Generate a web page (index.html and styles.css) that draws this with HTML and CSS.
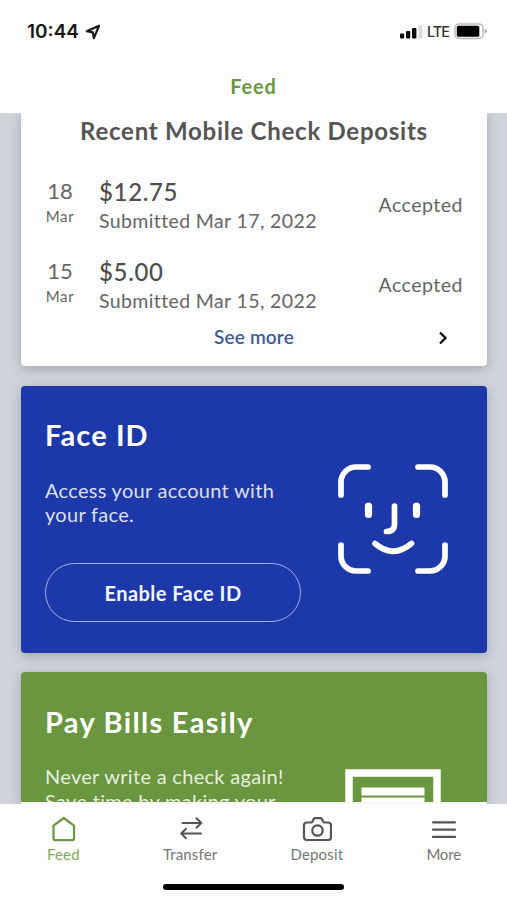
FILE: index.html
```
<!DOCTYPE html>
<html lang="en">
<head>
<meta charset="utf-8">
<title>Feed</title>
<link rel="stylesheet" href="styles.css">
</head>
<body>
<div class="phone">
  <header class="header">
    <div class="status">
      <div class="status-left">
        <span class="time">10:44</span>
        <svg class="location" width="16" height="16" viewBox="0 0 16 16"><path d="M14 1.800 1.800 7.200l6 1.100 1.100 5.900z" fill="none" stroke="#161616" stroke-width="2.200" stroke-linejoin="round"/></svg>
      </div>
      <div class="status-right">
        <svg width="23" height="15" viewBox="0 0 23 15"><g fill="#0a0a0a"><rect x="0" y="9.500" width="4.200" height="5" rx="1.200"/><rect x="6" y="7" width="4.200" height="7.500" rx="1.200"/><rect x="12" y="4" width="4.400" height="10.500" rx="1.200"/></g><rect x="18.500" y="1" width="4" height="13.500" rx="1" fill="#dcdcdc"/></svg>
        <span class="lte">LTE</span>
        <svg class="battery" width="33" height="17" viewBox="0 0 33 17"><rect x="1" y="1" width="28" height="14.500" rx="4" fill="#fff" stroke="#bcbcbc" stroke-width="1.500"/><rect x="2.800" y="2.800" width="22.500" height="11" rx="1.500" fill="#000"/><path d="M30.700 5.800q2 .7 2 2.500t-2 2.500z" fill="#a8a8a8"/></svg>
      </div>
    </div>
    <h1 class="page-title">Feed</h1>
  </header>

  <main class="feed">
    <section class="card deposits">
      <h2 class="deposits-title">Recent Mobile Check Deposits</h2>
      <div class="deposit">
        <div class="date"><span class="day">18</span><span class="month">Mar</span></div>
        <div class="detail"><span class="amount">$12.75</span><span class="submitted">Submitted Mar 17, 2022</span></div>
        <span class="state">Accepted</span>
      </div>
      <div class="deposit">
        <div class="date"><span class="day">15</span><span class="month">Mar</span></div>
        <div class="detail"><span class="amount">$5.00</span><span class="submitted">Submitted Mar 15, 2022</span></div>
        <span class="state">Accepted</span>
      </div>
      <div class="more-row">
        <a class="see-more">See more</a>
        <svg class="chevron" width="10" height="14" viewBox="0 0 10 14"><path d="M2 1.500 7.500 7 2 12.500" fill="none" stroke="#111" stroke-width="2.300"/></svg>
      </div>
    </section>

    <section class="card promo face">
      <div class="promo-text">
        <h2 class="promo-title face-title">Face ID</h2>
        <p class="promo-copy">Access your account with<br>your face.</p>
        <button class="enable">Enable Face ID</button>
      </div>
      <svg class="face-icon" width="110" height="110" viewBox="0 0 110 110" fill="none" stroke="#fff" stroke-width="6" stroke-linecap="round"><path d="M3 31V18A15 15 0 0 1 18 3H30M80 3H92A15 15 0 0 1 107 18V31M107 81V92A15 15 0 0 1 92 107H80M30 107H18A15 15 0 0 1 3 92V81" stroke-width="5.700"/><path d="M56.500 42V60Q56.500 67.500 48.500 67.500M37 79.500Q55 95 73.500 79.500" stroke-width="5.700"/><path d="M30.500 42v8.500M78.500 42v8.500" stroke-width="7.200"/></svg>
    </section>

    <section class="card promo bills">
      <div class="promo-text">
        <h2 class="promo-title bills-title">Pay Bills Easily</h2>
        <p class="promo-copy">Never write a check again!<br>Save time by making your</p>
      </div>
      <svg class="bill-icon" width="96" height="96" viewBox="0 0 96 96"><path d="M4 96V4H92V96" fill="none" stroke="#fff" stroke-width="7.500"/><path d="M16.500 18.500h63v8h-63zM16.500 28.500h63v50h-63z" fill="#fff"/></svg>
    </section>
    <div class="feed-edge"></div>
  </main>

  <nav class="tabs">
    <a class="tab active">
      <svg width="30" height="28" viewBox="0 0 30 28" fill="none" stroke="#6a973f" stroke-width="2.200" stroke-linejoin="round"><path d="M5.500 9.700 15.800 2l10.200 7.700v12.500a2 2 0 0 1-2 2H7.500a2 2 0 0 1-2-2z"/></svg>
      <span>Feed</span>
    </a>
    <a class="tab">
      <svg width="30" height="28" viewBox="0 0 30 28" fill="none" stroke="#555" stroke-width="2" stroke-linecap="round" stroke-linejoin="round"><path d="M7.500 7h18.500M21.500 2.300l4.800 4.700-4.800 4.700M26 17.500H7M11 12.800 6.200 17.500l4.800 4.700"/></svg>
      <span>Transfer</span>
    </a>
    <a class="tab">
      <svg width="30" height="28" viewBox="0 0 30 28" fill="none" stroke="#555" stroke-width="2.200" stroke-linejoin="round"><path d="M4.500 6.500h4.500q1 0 1.500-1l1.200-2.400q.5-.9 1.500-.9h5.200q1 0 1.500.9l1.200 2.400q.5 1 1.500 1H26a3 3 0 0 1 3 3V21a3 3 0 0 1-3 3h-21a3 3 0 0 1-3-3V9.500A3 3 0 0 1 4.500 6.500z"/><circle cx="15.500" cy="14.500" r="5.200"/></svg>
      <span>Deposit</span>
    </a>
    <a class="tab">
      <svg width="30" height="28" viewBox="0 0 30 28" fill="none" stroke="#555" stroke-width="2.300" stroke-linecap="round"><path d="M4 6.300h22M4 13.600h22M4 20.900h22"/></svg>
      <span class="more-label">More</span>
    </a>
  </nav>
  <div class="home-bar"></div>
</div>
</body>
</html>
```
FILE: styles.css
```
* { box-sizing: border-box; }
body { margin: 0; font-family: Lato, "Open Sans", sans-serif; color: #666; background: #fdfdfd; }
h1, h2, p { margin: 0; }

.phone { display: flex; flex-direction: column; width: 507px; height: 900px; overflow: hidden; }

.header { flex: none; height: 113px; background: #fdfdfd; }
.status { display: flex; justify-content: space-between; align-items: center; height: 63px; padding: 0 20px 0 27px; }
.status-left, .status-right { display: flex; align-items: center; }
.time { font: 600 19px/24px Inter, sans-serif; color: #161616; }
.location { margin-left: 6px; }
.lte { margin: 0 5px 0 4px; font: 500 14.500px/20px Inter, sans-serif; letter-spacing: -1px; color: #333; width: 22px; }
.page-title { margin-top: 10px; text-align: center; font-size: 20px; line-height: 26px; letter-spacing: .9px; color: #6a973f; }

.feed { flex: none; height: 691px; overflow: hidden; padding: 0 20px 0 21px; background: #d0d4da; }
.card { border-radius: 4px; box-shadow: 0 3px 12px rgba(60, 65, 75, .32); }

.deposits { height: 252.500px; padding: 3.500px 24px 0; border-radius: 0 0 4px 4px; background: #fdfdfd; }
.deposits-title { margin-bottom: 28px; text-align: center; font-size: 24px; line-height: 28px; letter-spacing: .74px; color: #555; white-space: nowrap; }
.deposit { display: flex; height: 80.500px; }
.date { width: 30px; display: flex; flex-direction: column; align-items: center; }
.day { font-size: 22px; line-height: 36px; }
.month { font-size: 15px; line-height: 14px; letter-spacing: .6px; }
.detail { flex: 1; margin-left: 24px; display: flex; flex-direction: column; }
.amount { font-size: 24px; line-height: 38px; font-weight: 500; letter-spacing: .65px; color: #4d4d4d; }
.submitted { font-size: 19.500px; line-height: 20px; letter-spacing: .38px; white-space: nowrap; }
.state { font-size: 19.500px; line-height: 63px; letter-spacing: .5px; }
.more-row { display: flex; justify-content: center; position: relative; margin-top: -8.500px; }
.see-more { font-size: 19px; line-height: 24px; font-weight: 600; letter-spacing: .15px; color: #3c5c94; }
.chevron { position: absolute; right: 15px; top: 6px; }

.promo { display: flex; justify-content: space-between; padding: 0 39px 0 24px; color: #fff; }
.face { margin-top: 20px; height: 267px; background: #1d38a9; }
.promo-title { margin-top: 31.500px; font-size: 29px; line-height: 36px; white-space: nowrap; }
.face-title { letter-spacing: 1.1px; }
.bills-title { letter-spacing: 1.3px; }
.promo-copy { margin-top: 24.500px; font-size: 20px; line-height: 24.500px; letter-spacing: .3px; color: rgba(255, 255, 255, .86); white-space: nowrap; }
.enable { display: block; width: 256px; height: 59px; margin-top: 36px; padding: 1px 0 0; border: 1.500px solid #a0aff0; border-radius: 30px; background: none; color: #f3f5ff; font: 700 20px/24px Lato, sans-serif; letter-spacing: .45px; }
.face-icon { margin-top: 78px; }
.bills { margin-top: 19.500px; height: 129.500px; overflow: hidden; background: #69963f; border-radius: 4px 4px 0 0; }
.bill-icon { flex: none; margin: 97px 7px 0 0; }
.feed-edge { position: relative; height: 4px; background: #f7f9f4; }

.tabs { flex: none; display: flex; height: 75px; padding-top: 12px; background: #fdfdfd; }
.tab { flex: 1; display: flex; flex-direction: column; align-items: center; font-size: 15px; line-height: 20px; letter-spacing: .15px; color: #777; }
.more-label { letter-spacing: -.2px; }
.tab.active { color: #83aa61; }
.home-bar { flex: none; align-self: center; width: 181px; height: 6px; margin-top: 5px; border-radius: 3px; background: #000; }
```
